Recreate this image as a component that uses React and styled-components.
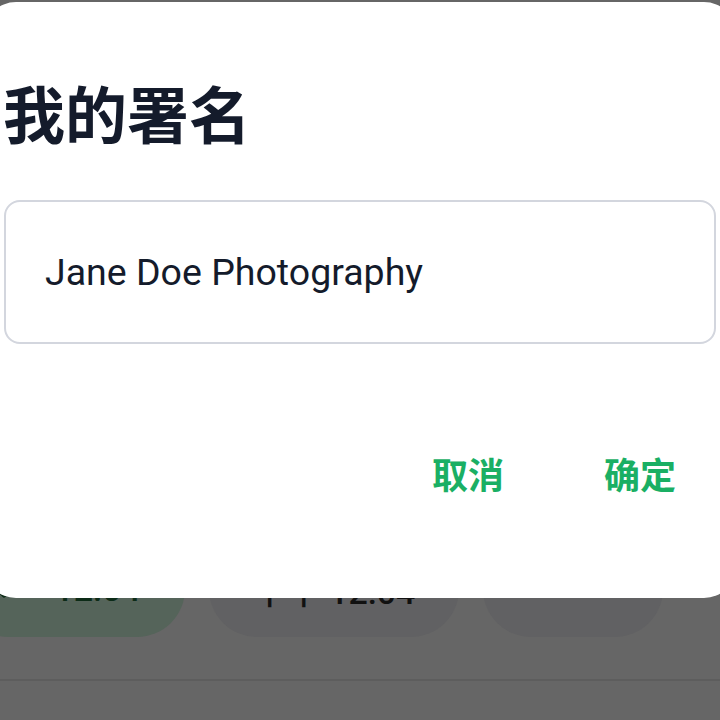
import React from "react"
import styled, { createGlobalStyle } from "styled-components"
import { Check } from "lucide-react"

const GlobalStyle = createGlobalStyle`
  html, body {
    margin: 0;
    padding: 0;
    background: #666666;
  }
  * {
    box-sizing: border-box;
  }
`

const Screen = styled.div`
  position: relative;
  width: 720px;
  height: 720px;
  overflow: hidden;
  background: #666666;
  font-family: Roboto, "Noto Sans CJK SC", sans-serif;
`

const Backdrop = styled.div`
  display: flex;
  flex-direction: column;
  padding-top: 541px;
`

const PillRow = styled.div`
  display: flex;
  gap: 24px;
  margin-left: -40px;
`

const Pill = styled.div`
  width: ${props => props.w}px;
  height: 96px;
  border-radius: 48px;
  background: ${props => (props.active ? "#55645a" : "#616163")};
  color: ${props => (props.active ? "#0c2b17" : "#111111")};
  display: flex;
  align-items: center;
  justify-content: center;
  gap: ${props => (props.active ? "30px" : "10px")};
  padding-right: ${props => (props.active ? "12px" : "0")};
  font-family: Roboto, "Noto Sans CJK SC", sans-serif;
  font-size: 34px;
  font-weight: 500;
`

const BottomBar = styled.div`
  margin-top: 42px;
  height: 41px;
  border-top: 2px solid #5d5d5d;
`

const Sheet = styled.div`
  position: absolute;
  top: 2px;
  left: -16px;
  right: -16px;
  height: 596px;
  background: #ffffff;
  border-radius: 32px;
  display: flex;
  flex-direction: column;
  padding: 73px 20px 0 20px;
`

const Title = styled.h1`
  margin: 0 0 0 -1px;
  font-family: "Noto Sans CJK SC", sans-serif;
  font-size: 62px;
  line-height: 74px;
  font-weight: 700;
  color: #141b2b;
`

const Field = styled.div`
  margin-top: 51px;
  height: 144px;
  border: 2px solid #d3d6de;
  border-radius: 16px;
  display: flex;
  align-items: center;
  padding: 0 39px;
  font-family: Roboto, sans-serif;
  font-size: 37.5px;
  color: #141b2b;
`

const Actions = styled.div`
  margin-top: 100px;
  display: flex;
  justify-content: flex-end;
  gap: 20px;
`

const ActionButton = styled.button`
  border: none;
  background: transparent;
  padding: 8px 40px;
  font-family: "Noto Sans CJK SC", sans-serif;
  font-size: 36px;
  line-height: 43px;
  font-weight: 700;
  color: #1aaf64;
  cursor: pointer;
`

const App = () => {
  return (
    <Screen>
      <GlobalStyle />
      <Backdrop>
        <PillRow>
          <Pill w={225} active>
            <Check size={32} strokeWidth={3} />
            12:04
          </Pill>
          <Pill w={250}>中午 12:04</Pill>
          <Pill w={180} />
        </PillRow>
        <BottomBar />
      </Backdrop>
      <Sheet>
        <Title>我的署名</Title>
        <Field>Jane Doe Photography</Field>
        <Actions>
          <ActionButton>取消</ActionButton>
          <ActionButton>确定</ActionButton>
        </Actions>
      </Sheet>
    </Screen>
  )
}

export default App
